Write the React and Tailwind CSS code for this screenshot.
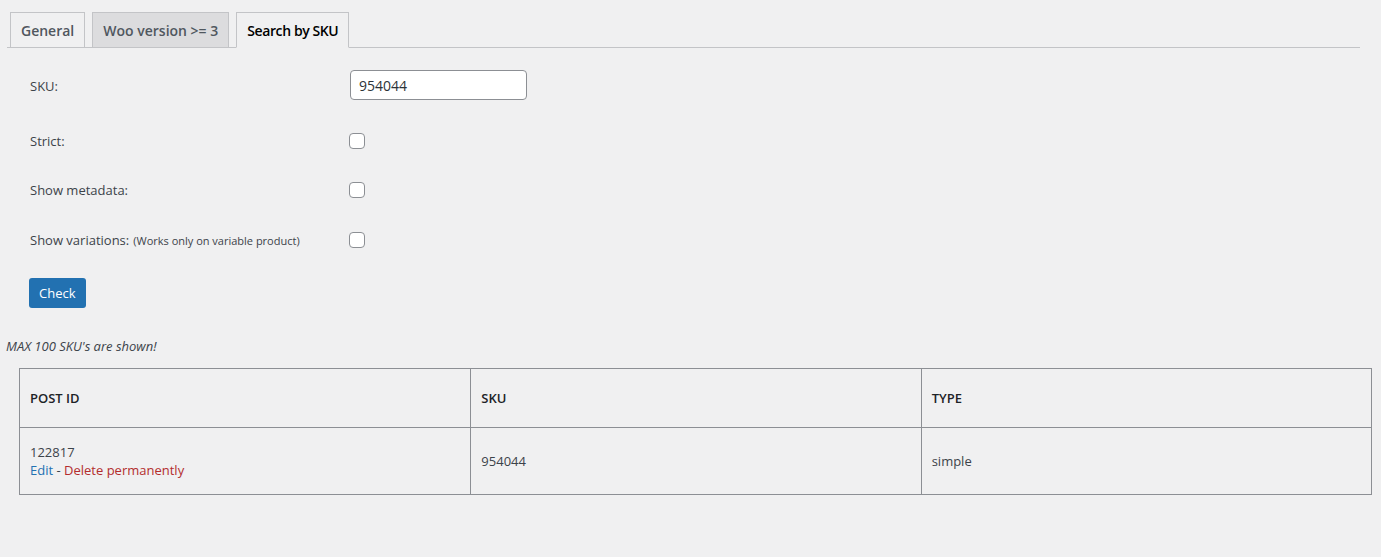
function Tab({ label, active, dim }) {
  if (active) {
    return (
      <div className="-mb-px flex h-[36px] items-center border border-[#c3c4c7] border-b-[#f0f0f1] bg-[#f0f0f1] px-[10px] text-[14px] font-semibold tracking-[-0.4px] text-black">
        {label}
      </div>
    );
  }
  return (
    <div
      className={
        "-mb-px flex h-[36px] items-center border border-[#c3c4c7] px-[10px] text-[14px] font-semibold text-[#50575e] " +
        (dim ? "bg-[#dcdcde]" : "bg-[#f0f0f1]")
      }
    >
      {label}
    </div>
  );
}

function CheckRow({ label, note, className }) {
  return (
    <div className={"flex h-[30px] items-center " + className}>
      <div className="w-[319px] pt-[2px] text-[13px] text-[#3c434a]">
        {label}
        {note && <span className="ml-1 text-[11px]">{note}</span>}
      </div>
      <span className="block h-4 w-4 rounded-[4px] border border-[#8c8f94] bg-white" />
    </div>
  );
}

export default function App() {
  return (
    <div className="min-h-screen bg-[#f0f0f1] font-['Open_Sans','Noto_Sans',sans-serif] text-[13px] text-[#3c434a]">
      {/* Tabs */}
      <div className="ml-[7px] mr-[21px] flex gap-[7px] border-b border-[#c3c4c7] pl-[3px] pt-[12px]">
        <Tab label="General" />
        <Tab label="Woo version >= 3" dim />
        <Tab label="Search by SKU" active />
      </div>

      {/* Search form */}
      <div className="pl-[30px]">
        <div className="mt-[22px] flex h-[30px] items-center">
          <div className="w-[320px] pt-[3px]">SKU:</div>
          <div className="flex h-[30px] w-[177px] items-center rounded-[4px] border border-[#8c8f94] bg-white px-2 text-[14px] text-[#2c3338]">
            954044
          </div>
        </div>
        <CheckRow label="Strict:" className="mt-[26px]" />
        <CheckRow label="Show metadata:" className="mt-[19px]" />
        <CheckRow
          label="Show variations:"
          note="(Works only on variable product)"
          className="mt-[20px]"
        />
        <button className="-ml-px mt-[23px] flex h-[30px] items-center rounded-[3px] bg-[#2271b1] px-[10px] pt-[1px] text-[13px] text-white">
          Check
        </button>
      </div>

      <p className="ml-[6px] mt-[30px] text-[13px] italic leading-[17px] text-[#3c434a]">
        MAX 100 SKU's are shown!
      </p>

      {/* Results */}
      <div className="ml-[19px] mr-[9px] mt-[13px] border border-[#8c8f94]">
        <div className="grid h-[59px] grid-cols-3 border-b border-[#8c8f94] text-[13px] font-semibold text-[#1d2327]">
          <div className="flex items-center px-[10px] pt-[2px]">POST ID</div>
          <div className="flex items-center border-l border-[#8c8f94] px-[10px] pt-[2px]">SKU</div>
          <div className="flex items-center border-l border-[#8c8f94] px-[10px] pt-[2px]">TYPE</div>
        </div>
        <div className="grid h-[66px] grid-cols-3 text-[13px] leading-[18px]">
          <div className="flex flex-col justify-center px-[10px]">
            <span>122817</span>
            <span>
              <a className="text-[#2271b1]">Edit</a>
              {" - "}
              <a className="text-[#b32d2e]">Delete permanently</a>
            </span>
          </div>
          <div className="flex items-center border-l border-[#8c8f94] px-[10px]">954044</div>
          <div className="flex items-center border-l border-[#8c8f94] px-[10px]">simple</div>
        </div>
      </div>
    </div>
  );
}
